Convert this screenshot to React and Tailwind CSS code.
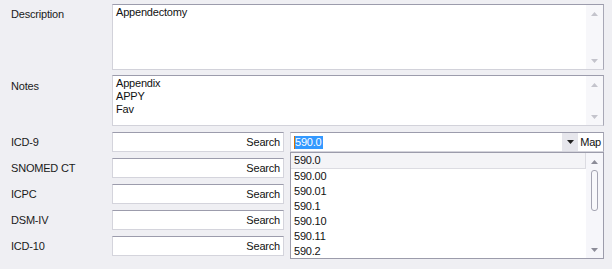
import React from "react";

const font = { fontFamily: '"Liberation Sans", Arial, sans-serif' };

function Up({ color = "#c4c4cc" }) {
  return (
    <svg width="7" height="4" viewBox="0 0 7 4"><path d="M3.5 0 L7 4 L0 4 Z" fill={color} /></svg>
  );
}
function Down({ color = "#c4c4cc" }) {
  return (
    <svg width="7" height="4" viewBox="0 0 7 4"><path d="M0 0 L7 0 L3.5 4 Z" fill={color} /></svg>
  );
}

function TextArea({ h, lines }) {
  return (
    <div className={`flex w-[492px] ${h} border border-[#d2d2da] border-t-[#9c9cac] border-r-[#a8a8b6] bg-white`}>
      <div className="flex-1 pl-[3px] pt-[1px] text-[11px] leading-[13px] tracking-[-0.2px] text-[#111]">
        {lines.map((l) => (
          <div key={l}>{l}</div>
        ))}
      </div>
      <div className="flex w-[17px] flex-col items-center justify-between bg-[#f7f7fa] pt-[7px] pb-[6px]">
        <Up />
        <Down />
      </div>
    </div>
  );
}

function SearchBox() {
  return (
    <div className="flex h-[20px] w-[172px] items-center justify-end border border-[#d4d4dc] border-t-[#9c9cac] bg-white pr-[3px] text-[11px] tracking-[-0.2px] text-[#111]">
      Search
    </div>
  );
}

const items = ["590.0", "590.00", "590.01", "590.1", "590.10", "590.11", "590.2"];

export default function App() {
  return (
    <div className="h-[269px] w-[612px] bg-[#efeff3] text-[11px] tracking-[-0.2px] text-[#1a1a1a]" style={font}>
      <div className="flex flex-col pt-[4px]">
        <div className="flex">
          <div className="w-[112px] pl-[11px] pt-[2px]">Description</div>
          <TextArea h="h-[66px]" lines={["Appendectomy"]} />
        </div>
        <div className="mt-[5px] flex">
          <div className="w-[112px] pl-[11px] pt-[3px]">Notes</div>
          <TextArea h="h-[51px]" lines={["Appendix", "APPY", "Fav"]} />
        </div>
        <div className="mt-[6px] flex">
          <div className="flex flex-col gap-[6px]">
            {["ICD-9", "SNOMED CT", "ICPC", "DSM-IV", "ICD-10"].map((l) => (
              <div key={l} className="flex items-center">
                <div className="w-[112px] pl-[11px]">{l}</div>
                <SearchBox />
              </div>
            ))}
          </div>
          <div className="ml-[6px] flex w-[314px] flex-col">
            <div className="flex h-[20px] items-stretch border border-[#d4d4dc] border-t-[#9c9cac] border-r-[#a8a8b6] bg-white">
              <div className="flex flex-1 items-center pl-[3px]">
                <span className="relative bg-[#3399ff] px-px leading-[13px] text-white">
                  <span className="absolute left-0 top-0 h-full w-px bg-[#e07000]" />
                  590.0
                </span>
              </div>
              <div className="flex w-[16px] items-center justify-center bg-[#e6e6ec]">
                <Down color="#222" />
              </div>
              <div className="flex items-center px-[2px] text-[#111]">Map</div>
            </div>
            <div className="flex h-[107px] border border-[#9c9cab] bg-white">
              <div className="flex flex-1 flex-col">
                <div className="flex h-[16px] items-center border-b border-r border-[#dcdce2] bg-[#f4f4f7] pl-[3px] text-[#111]">
                  590.0
                </div>
                {items.slice(1).map((it) => (
                  <div key={it} className="flex h-[15px] items-center pl-[3px] text-[#111]">
                    {it}
                  </div>
                ))}
              </div>
              <div className="flex w-[17px] flex-col items-center bg-[#f6f6fa] pt-[7px] pb-[6px]">
                <Up color="#8c8c98" />
                <div className="mt-[6px] h-[41px] w-[7px] rounded-[3px] border border-[#a4a4b2] bg-[#f8f8fb]" />
                <div className="flex-1" />
                <Down color="#8c8c98" />
              </div>
            </div>
          </div>
        </div>
      </div>
    </div>
  );
}
